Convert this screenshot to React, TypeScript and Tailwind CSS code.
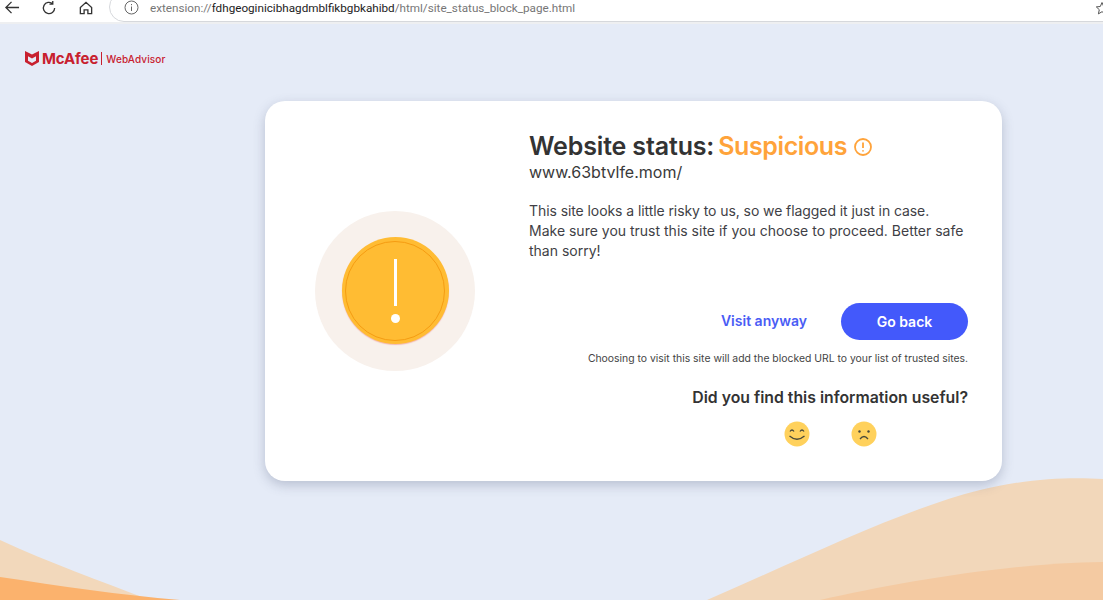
import React from "react";

const sans = "font-['Inter','Noto_Sans',sans-serif]";

function Toolbar() {
  return (
    <div className="h-[24px] bg-white border-b-[2px] border-[#eeeff1] flex items-start shrink-0 overflow-hidden">
      <svg className="ml-[4px]" width="16" height="15" viewBox="0 0 17 16" fill="none" stroke="#333" strokeWidth="1.400">
        <path d="M16 8H2M8 2 2 8l6 6" />
      </svg>
      <svg className="ml-[21px]" width="16" height="16" viewBox="0 0 17 17" fill="none" stroke="#333" strokeWidth="1.400">
        <path d="M14.500 8.500a6 6 0 1 1-2-4.500M12.500 1v3.400H9" />
      </svg>
      <svg className="ml-[21px]" width="16" height="16" viewBox="0 0 17 17" fill="none" stroke="#333" strokeWidth="1.400">
        <path d="M2.500 8 8.500 2.500 14.500 8v6.500h-4v-4h-4v4h-4z" />
      </svg>
      <div className="ml-[15px] mt-[-8px] h-[30px] flex-1 mr-[-20px] bg-white border border-[#d6d8dc] rounded-[15px] flex items-center pl-[14px]">
        <svg className="shrink-0" width="15" height="15" viewBox="0 0 15 15" fill="none" stroke="#666" strokeWidth="1">
          <circle cx="7.500" cy="7.500" r="6.500" />
          <path d="M7.500 6.500v4.500M7.500 4v1.200" />
        </svg>
        <div className="ml-[11px] mt-[1px] text-[11.700px] leading-[14px] text-[#767676] whitespace-nowrap font-['Roboto',sans-serif]">
          extension://<span className="text-[#1c1c1c]">fdhgeoginicibhagdmblfikbgbkahibd</span>/html/site_status_block_page.html
        </div>
        <svg className="absolute left-[1095px] top-[1px]" width="14" height="15" viewBox="0 0 14 15" fill="none" stroke="#555" strokeWidth="1">
          <path d="M7 1.500 8.700 5.500l4 .4-3 2.800.9 4.200L7 10.700l-3.600 2.200.9-4.200-3-2.800 4-.4z" />
        </svg>
      </div>
    </div>
  );
}

function Logo() {
  return (
    <div className="flex items-center h-[20px] ml-[25px] mt-[24px] mb-[33px] text-[#c8202f]">
      <svg width="14" height="15" viewBox="0 0 14 15" fill="#c8202f">
        <path d="M0 0l3.500 1.800L7 3.600 10.500 1.800 14 0v11l-7 4-7-4zM3 5.300v4.400l4 2.300 4-2.300V5.300L7 7.400z" />
      </svg>
      <span className={`ml-[3px] text-[15px] font-bold leading-none tracking-[-0.1px] ${sans}`}>McAfee</span>
      <span className="ml-[3px] h-[13px] w-px bg-[#c8202f]" />
      <span className="ml-[4px] mt-[1px] text-[10px] font-medium leading-none tracking-[0.1px] font-['Inter',sans-serif]">WebAdvisor</span>
    </div>
  );
}

function Waves() {
  return (
    <svg className="absolute left-0 top-0" width="1103" height="600" viewBox="0 0 1103 600">
      <path d="M0 540C50 563 100 581 150 600H0z" fill="#f2d8bb" />
      <path d="M0 577C60 586 120 595 180 600H0z" fill="#fbb26d" />
      <path d="M707 600C800 560 900 510 980 490C1030 478 1070 477 1103 479V600z" fill="#f2d7ba" />
      <path d="M820 600C900 582 1010 563 1103 562V600z" fill="#f4caa2" />
    </svg>
  );
}

function AlertBadge() {
  return (
    <div className="w-[160px] h-[160px] rounded-full bg-[#f8f1ec] flex items-center justify-center">
      <div className="w-[107px] h-[107px] rounded-full bg-[#ffbc33] shadow-[0_1px_1px_#f3b8b0] flex items-center justify-center">
        <div className="w-[100px] h-[100px] rounded-full border border-[#f59c12] flex flex-col items-center pt-[17px]">
          <div className="w-[3px] h-[47px] bg-white" />
          <div className="w-[9px] h-[9px] rounded-full bg-white mt-[8px]" />
        </div>
      </div>
    </div>
  );
}

function Smile() {
  return (
    <svg width="26" height="26" viewBox="0 0 26 26" fill="none" stroke="#4a4a3a" strokeWidth="1.300">
      <circle cx="13" cy="13" r="12.500" fill="#ffd15c" stroke="none" />
      <path d="M6 10.500q2-3 4 0M16 10.500q2-3 4 0M5.500 15q7.500 6.500 15 0" />
    </svg>
  );
}

function Frown() {
  return (
    <svg width="26" height="26" viewBox="0 0 26 26" fill="none" stroke="#4a4a3a" strokeWidth="1.300">
      <circle cx="13" cy="13" r="12.500" fill="#ffd15c" stroke="none" />
      <circle cx="8.500" cy="10.500" r="1.200" fill="#4a4a3a" stroke="none" />
      <circle cx="17.500" cy="10.500" r="1.200" fill="#4a4a3a" stroke="none" />
      <path d="M9 18q4-5 8 0" />
    </svg>
  );
}

export default function App() {
  return (
    <div className="relative w-[1103px] h-[600px] overflow-hidden bg-[#e5ebf7] flex flex-col">
      <Waves />
      <Toolbar />
      <div className="relative">
        <Logo />
        <div className="ml-[265px] w-[737px] h-[380px] bg-white rounded-[20px] shadow-[0_4px_12px_rgba(70,80,110,0.28)] flex">
          <div className="w-[260px] flex items-center justify-center pb-[1px]">
            <AlertBadge />
          </div>
          <div className={`flex-1 pr-[34px] pt-[29px] pl-[4px] text-[#333] ${sans}`}>
            <div className="flex items-center h-[34px] text-[25px] font-semibold tracking-[-0.15px] whitespace-nowrap">
              <span>Website status:</span>
              <span className="ml-[4px] text-[#ffa33a] tracking-[-0.4px]">Suspicious</span>
              <svg className="ml-[6px]" width="20" height="20" viewBox="0 0 20 20" fill="none" stroke="#ffa33a" strokeWidth="1.800">
                <circle cx="10" cy="10" r="8" />
                <path d="M10 5.500v5.500M10 13.200v1.300" />
              </svg>
            </div>
            <div className="text-[16px] leading-[20px] mt-[-2px] text-[#3a3a3a]">www.63btvlfe.mom/</div>
            <p className="mt-[19px] text-[14px] leading-[20px] text-[#3f3f46]">
              <span className="tracking-[-0.08px]">This site looks a little risky to us, so we flagged it just in case.</span>
              <br />
              Make sure you trust this site if you choose to proceed. Better safe
              <br />
              than sorry!
            </p>
            <div className="mt-[42px] flex items-center justify-end">
              <span className="text-[14px] font-semibold text-[#4a5cf5] mr-[34px] mb-[2px] ml-[-1px]">Visit anyway</span>
              <div className="w-[127px] h-[37px] rounded-full bg-[#4359fb] flex items-center justify-center text-white text-[14px] font-semibold">
                <span className="mb-[1px]">Go back</span>
              </div>
            </div>
            <div className="mt-[12px] text-[10.400px] leading-[14px] text-right whitespace-nowrap text-[#444]">
              Choosing to visit this site will add the blocked URL to your list of trusted sites.
            </div>
            <div className="mt-[22px] text-[15.800px] leading-[20px] font-semibold text-right whitespace-nowrap text-[#333]">
              Did you find this information useful?
            </div>
            <div className="mt-[13px] flex ml-[255px] gap-[41px]">
              <Smile />
              <Frown />
            </div>
          </div>
        </div>
      </div>
    </div>
  );
}
